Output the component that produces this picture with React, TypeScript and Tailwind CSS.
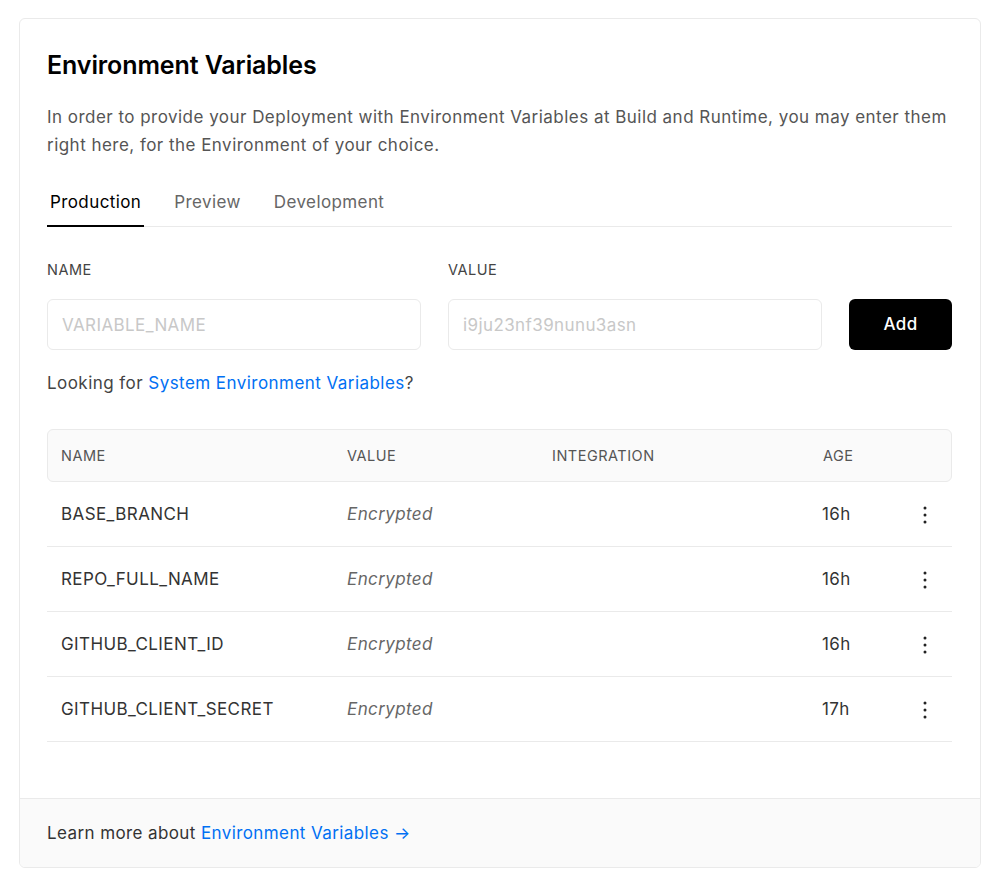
import React from "react";

const rows = [
  { name: "BASE_BRANCH", age: "16h" },
  { name: "REPO_FULL_NAME", age: "16h" },
  { name: "GITHUB_CLIENT_ID", age: "16h" },
  { name: "GITHUB_CLIENT_SECRET", age: "17h" },
];

function Dots() {
  return (
    <svg width="4" height="18" viewBox="0 0 4 18" className="text-[#222]">
      <circle cx="2" cy="2" r="1.5" fill="currentColor" />
      <circle cx="2" cy="9" r="1.5" fill="currentColor" />
      <circle cx="2" cy="16" r="1.5" fill="currentColor" />
    </svg>
  );
}

export default function App() {
  return (
    <div className="min-h-[886px] bg-white pt-[18px] px-[19px] font-['Inter',sans-serif] text-[#111] tracking-[0.4px]">
      <div className="w-[962px] border border-[#eaeaea] rounded-[6px] overflow-hidden">
        <div className="pl-[27px] pr-[28px] pt-[31px] pb-[56px]">
          <h1 className="text-[25px] leading-[30px] font-semibold text-black tracking-[-0.1px]">Environment Variables</h1>
          <p className="mt-[23px] text-[17px] leading-[28px] text-[#555] tracking-[0.47px]">
            In order to provide your Deployment with Environment Variables at Build and Runtime, you may enter them right here, for the Environment of your choice.
          </p>
          <div className="mt-[31px] flex border-b border-[#eaeaea] text-[17px] leading-[24px]">
            <div className="px-[3px] pb-[11px] border-b-2 border-black -mb-px text-black">Production</div>
            <div className="ml-[30px] pb-[11px] text-[#666]">Preview</div>
            <div className="ml-[33px] pb-[11px] text-[#666]">Development</div>
          </div>
          <div className="mt-[33px] flex items-end gap-[27px]">
            <div className="w-[374px]">
              <div className="text-[14.5px] tracking-[0.5px] leading-[20px] text-[#444] mb-[19px]">NAME</div>
              <input
                className="w-full h-[51px] border border-[#eaeaea] rounded-[6px] px-[14px] text-[17px] tracking-[0.4px] outline-none placeholder:text-[#c8c8c8]"
                placeholder="VARIABLE_NAME"
              />
            </div>
            <div className="w-[374px]">
              <div className="text-[14.5px] tracking-[0.5px] leading-[20px] text-[#444] mb-[19px]">VALUE</div>
              <input
                className="w-full h-[51px] border border-[#eaeaea] rounded-[6px] px-[14px] text-[17px] tracking-[0.4px] outline-none placeholder:text-[#c8c8c8]"
                placeholder="i9ju23nf39nunu3asn"
              />
            </div>
            <button className="w-[103px] h-[51px] pt-[1px] bg-black text-white rounded-[6px] text-[17px] font-medium tracking-[0.4px]">Add</button>
          </div>
          <div className="mt-[20px] text-[17px] leading-[26px] text-[#444] tracking-[0.45px]">
            Looking for <span className="text-[#0070f3]">System Environment Variables</span>?
          </div>
          <div className="mt-[33px]">
            <div className="h-[53px] flex items-center bg-[#fafafa] border border-[#eaeaea] rounded-[6px] text-[14.5px] tracking-[0.5px] text-[#555]">
              <div className="w-[299px] pl-[13px]">NAME</div>
              <div className="w-[205px]">VALUE</div>
              <div className="w-[271px]">INTEGRATION</div>
              <div>AGE</div>
            </div>
            {rows.map((r) => (
              <div key={r.name} className="h-[65px] pt-[2px] flex items-center border-b border-[#eaeaea] text-[17px] text-[#333]">
                <div className="w-[299px] pl-[14px]">{r.name}</div>
                <div className="w-[205px] pl-[1px] italic text-[#666]">Encrypted</div>
                <div className="w-[271px]"></div>
                <div className="w-[101px]">{r.age}</div>
                <div className="flex items-center">
                  <Dots />
                </div>
              </div>
            ))}
          </div>
        </div>
        <div className="h-[69px] pt-[2px] flex items-center px-[27px] bg-[#fafafa] border-t border-[#eaeaea] text-[17px] text-[#333]">
          Learn more about&nbsp;<span className="text-[#0070f3]">Environment Variables →</span>
        </div>
      </div>
    </div>
  );
}
